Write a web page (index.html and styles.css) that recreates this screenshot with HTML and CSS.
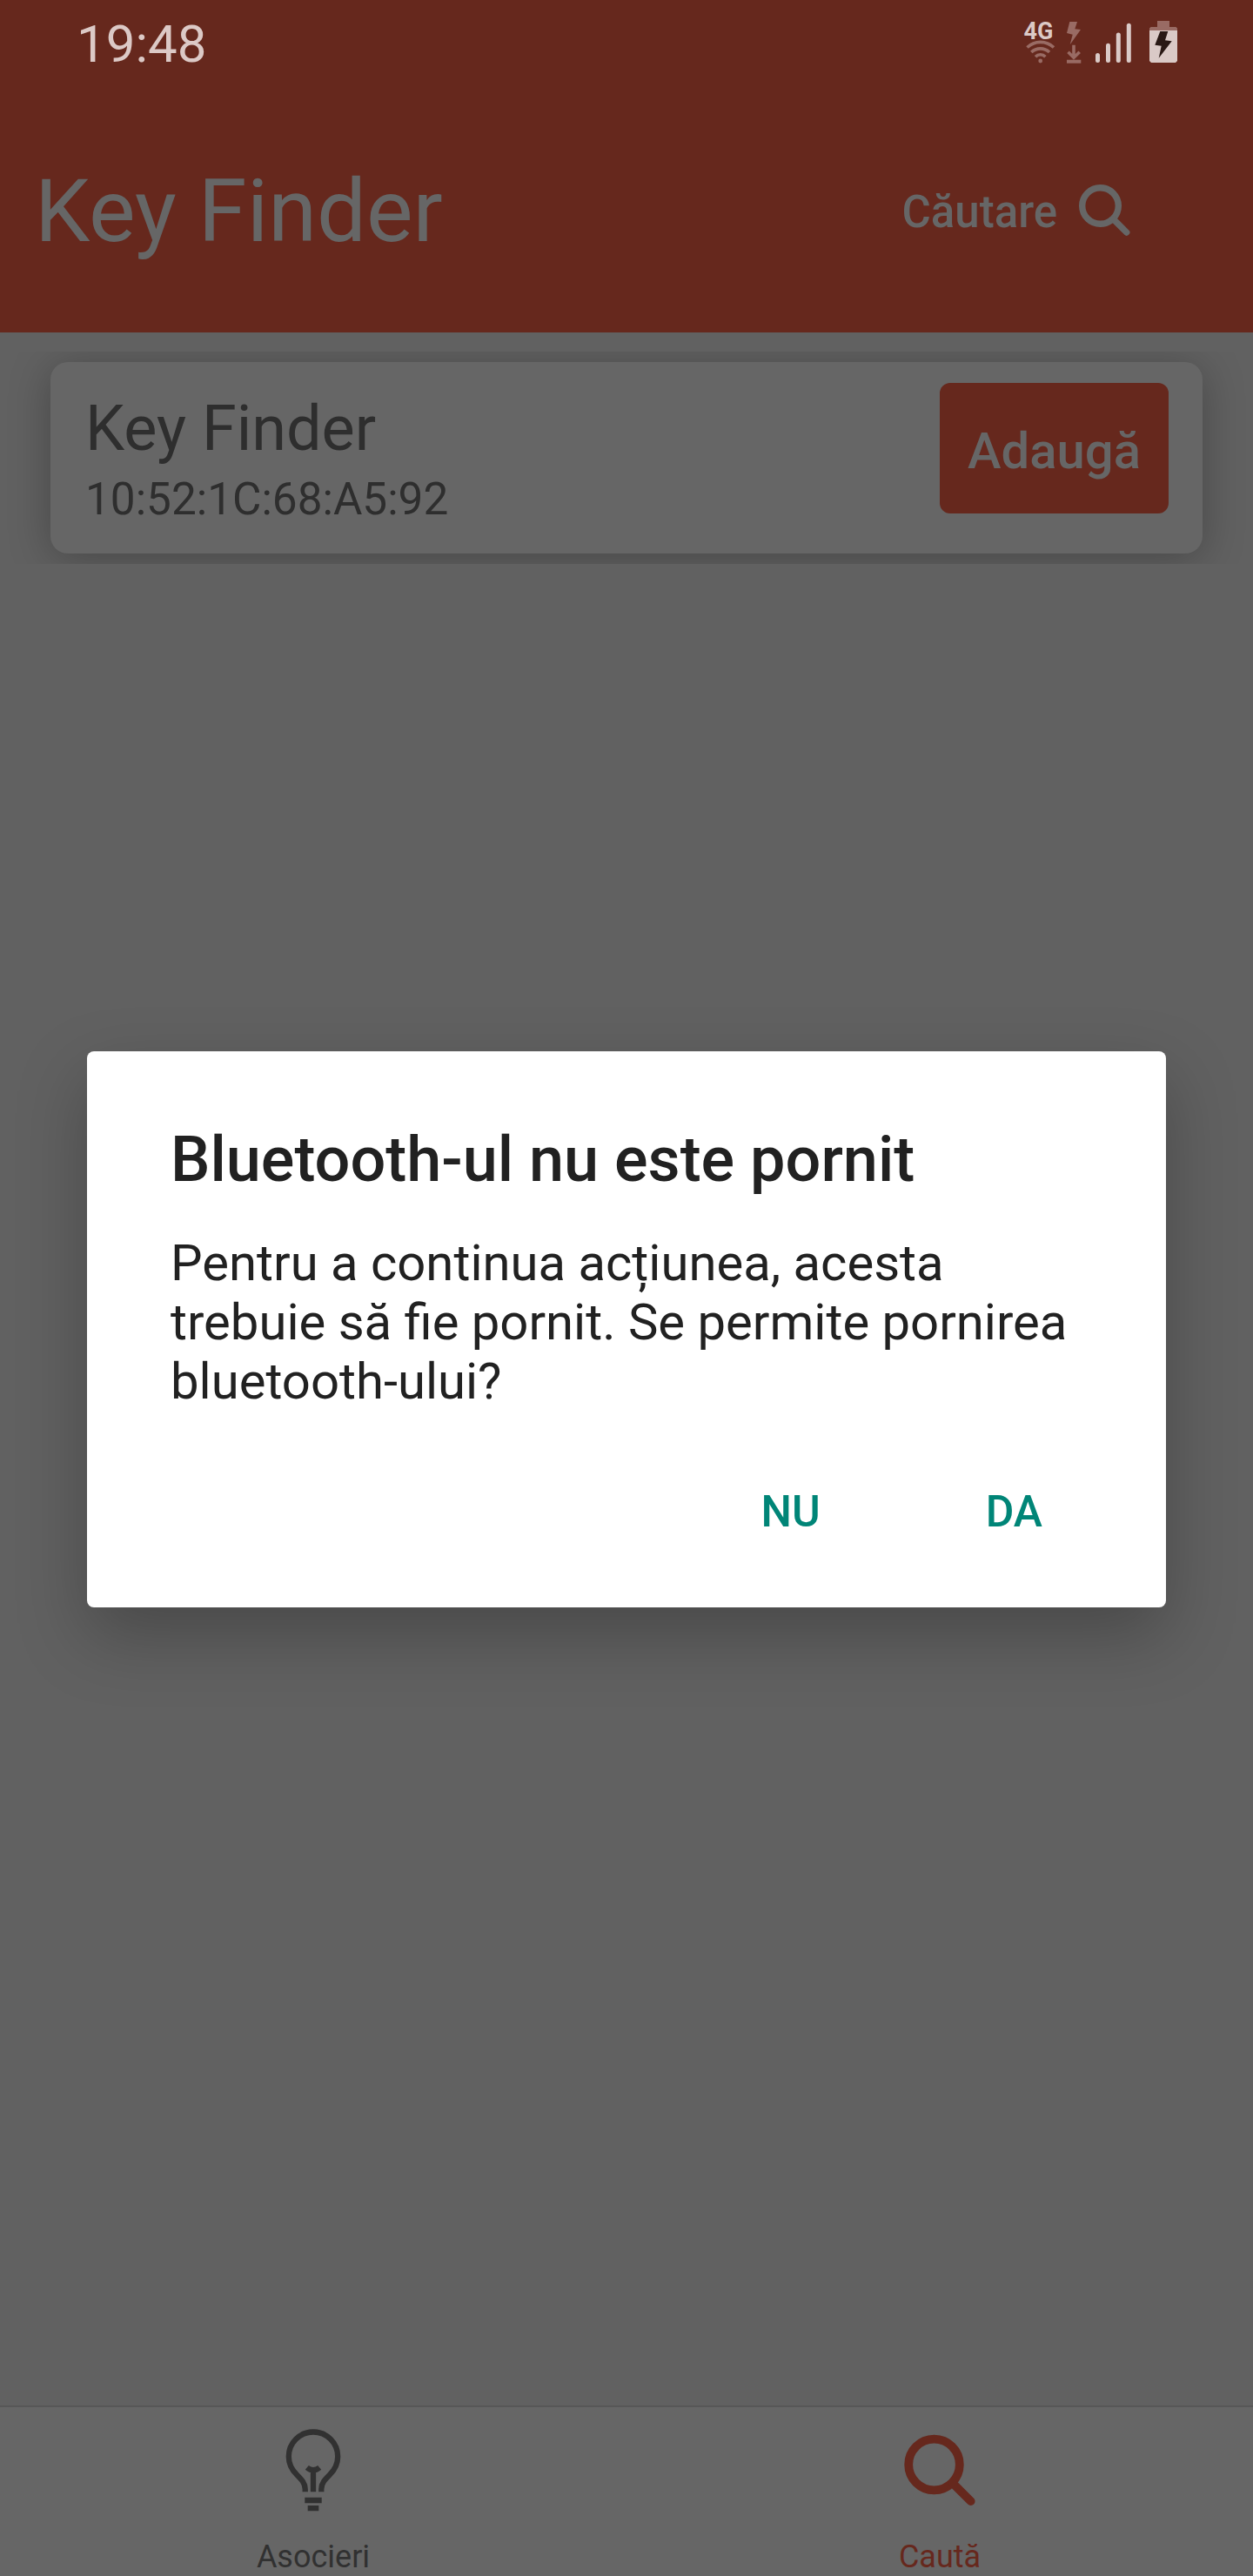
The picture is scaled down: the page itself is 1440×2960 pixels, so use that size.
FILE: index.html
```html
<!DOCTYPE html>
<html lang="ro">
<head>
<meta charset="utf-8">
<title>Key Finder</title>
<link rel="stylesheet" href="styles.css">
</head>
<body>
<div class="screen">
  <header class="header">
    <div class="status">
      <span class="clock">19:48</span>
      <div class="status-icons">
        <svg class="ic-network" width="38" height="56" viewBox="0 0 38 56">
          <text class="net-label" x="0.5" y="24.6">4G</text>
          <g class="dim-stroke"><path d="M4.5 34.5A22 22 0 0 1 35 34.5"/><path d="M9.3 40A15 15 0 0 1 30 40"/><path d="M14 45.2A8 8 0 0 1 25.4 45.2"/></g>
          <circle class="dim" cx="19.7" cy="50" r="2.4"/>
        </svg>
        <svg class="ic-transfer" width="20" height="56" viewBox="0 0 20 56">
          <path class="dim" d="M5.3 5H14L11.3 13.3L18 14L5.7 31.3L8.7 19.7L2 18Z"/>
          <g class="dim-stroke"><path d="M10 31.7V46M3.5 39.7L10 46.2L16.7 39.7"/></g>
          <path class="dim" d="M2 48.7H18.3V52.7H2Z"/>
        </svg>
        <svg class="ic-signal" width="44" height="56" viewBox="0 0 44 56">
          <g class="bright"><rect x="1" y="41" width="5" height="11" rx="2.5"/><rect x="13" y="29.7" width="5" height="22.3" rx="2.5"/><rect x="24.8" y="17.5" width="5" height="34.5" rx="2.5"/><rect x="36.8" y="6.8" width="5" height="45.2" rx="2.5"/></g>
        </svg>
        <svg class="ic-battery" width="34" height="56" viewBox="0 0 34 56">
          <path class="dim" d="M10 4H24V11H31.5L33 12.5V15H1V12.5L2.5 11H10Z"/>
          <path class="bright" d="M1 15H33V50L31 52H3L1 50Z"/>
          <path class="bolt" d="M13.3 16H22.3L19 26.3L26.7 27.3L11.7 46.7L14.7 32.7L7.3 31.7Z"/>
        </svg>
      </div>
    </div>
    <div class="toolbar">
      <h1 class="app-title">Key Finder</h1>
      <div class="search">
        <span>Căutare</span>
        <svg width="64" height="64" viewBox="0 0 64 64"><circle cx="26.5" cy="26.5" r="20.8"/><path d="M41.5 41.8L56.7 57"/></svg>
      </div>
    </div>
  </header>

  <main class="list">
    <div class="item">
      <div class="card">
        <div class="device">
          <div class="device-name">Key Finder</div>
          <div class="device-mac">10:52:1C:68:A5:92</div>
        </div>
        <div class="add">Adaugă</div>
      </div>
    </div>
  </main>

  <nav class="tabs">
    <div class="tab">
      <svg width="70" height="100" viewBox="0 0 70 100">
        <g class="bulb"><path d="M25.7 75.3V72C25.7 65 21 60.5 16 55.5C10 49.5 6.8 43.5 6.8 34.7A28.2 28.2 0 0 1 63.2 34.7C63.2 43.5 60 49.5 54 55.5C49 60.5 44.3 65 44.3 72V75.3"/><path d="M35 50V75.3M27.8 47.3Q35 53.3 42.2 47.3M25.3 85H44.7M28.7 94.2H41.3"/></g>
      </svg>
      <span>Asocieri</span>
    </div>
    <div class="tab tab-active">
      <svg width="100" height="100" viewBox="0 0 100 100"><circle cx="43.5" cy="44" r="29.3"/><path d="M64.8 65.2L85.7 86.1"/></svg>
      <span>Caută</span>
    </div>
  </nav>

  <div class="dialog">
    <h2 class="dialog-title">Bluetooth-ul nu este pornit</h2>
    <p class="dialog-text">Pentru a continua acțiunea, acesta<br>trebuie să fie pornit. Se permite pornirea<br>bluetooth-ului?</p>
    <div class="actions"><span class="no">NU</span><span class="yes">DA</span></div>
  </div>
</div>
</body>
</html>
```
FILE: styles.css
```css
* { box-sizing: border-box; margin: 0; padding: 0; }
body { font-family: Roboto, "Liberation Sans", sans-serif; background: #616161; }
svg { display: block; flex: none; }
.screen { position: relative; width: 1440px; height: 2960px; display: flex; flex-direction: column; overflow: hidden; background: #616161; }

.header { height: 382px; background: #66281d; }
.status { height: 101px; padding: 0 86px 0 88px; display: flex; justify-content: space-between; align-items: center; }
.clock { font-size: 60px; line-height: 101px; color: #dcc9c6; }
.status-icons { display: flex; margin-top: -5px; }
.net-label { font-size: 27px; font-weight: 700; fill: #dcc9c6; }
.bright { fill: #dacac7; }
.dim { fill: #996b64; }
.dim-stroke { fill: none; stroke: #996b64; stroke-width: 3.6; }
.bolt { fill: #291915; }
.ic-transfer { margin-left: 10px; }
.ic-signal { margin-left: 14px; }
.ic-battery { margin-left: 18px; }

.toolbar { height: 281px; padding: 1px 138px 0 40px; display: flex; justify-content: space-between; align-items: center; color: #666; }
.app-title { padding-top: 2px; font-size: 101px; line-height: 120px; font-weight: 400; }
.search { display: flex; align-items: center; gap: 23px; font-size: 51px; line-height: 60px; font-weight: 500; }
.search span { padding-top: 3px; }
.search svg { fill: none; stroke: #666; stroke-width: 7.4; stroke-linecap: round; }

.list { flex: 1; padding-top: 22px; }
.item { height: 244px; padding: 12px 58px; overflow: hidden; }
.card { height: 220px; padding: 24px 39px 0 40px; display: flex; justify-content: space-between; align-items: flex-start; border-radius: 20px; background: #666; box-shadow: 0 6px 48px rgba(0, 0, 0, .27); color: #2e2e2e; }
.device { padding-top: 11px; }
.device-name { font-size: 72px; line-height: 84px; }
.device-mac { margin-top: 9px; font-size: 51.3px; line-height: 60px; }
.add { width: 263px; height: 150px; padding-top: 7px; border-radius: 12px; background: #66281d; color: #666; font-size: 58px; line-height: 143px; font-weight: 500; text-align: center; }

.tabs { height: 196px; border-top: 2px solid #575757; display: flex; background: #666; }
.tab { flex: 1; padding-top: 22px; display: flex; flex-direction: column; align-items: center; color: #313131; font-size: 36px; line-height: 42px; }
.tab span { margin-top: 29px; }
.bulb { fill: none; stroke: #313131; stroke-width: 6.3; }
.tab-active { color: #66281d; }
.tab-active svg { fill: none; stroke: #66281d; stroke-width: 9.8; stroke-linecap: round; }

.dialog { position: absolute; left: 100px; top: 1208px; width: 1240px; height: 639px; padding: 83px 96px 0; border-radius: 8px; background: #fff; color: #212121; box-shadow: 0 32px 80px rgba(0, 0, 0, .25); }
.dialog-title { font-size: 72px; line-height: 84px; font-weight: 500; }
.dialog-text { margin-top: 42px; font-size: 58px; line-height: 68px; white-space: nowrap; }
.actions { margin-top: 86px; padding-right: 46px; display: flex; justify-content: flex-end; gap: 190px; color: #008577; font-size: 50px; line-height: 60px; font-weight: 500; }
```
